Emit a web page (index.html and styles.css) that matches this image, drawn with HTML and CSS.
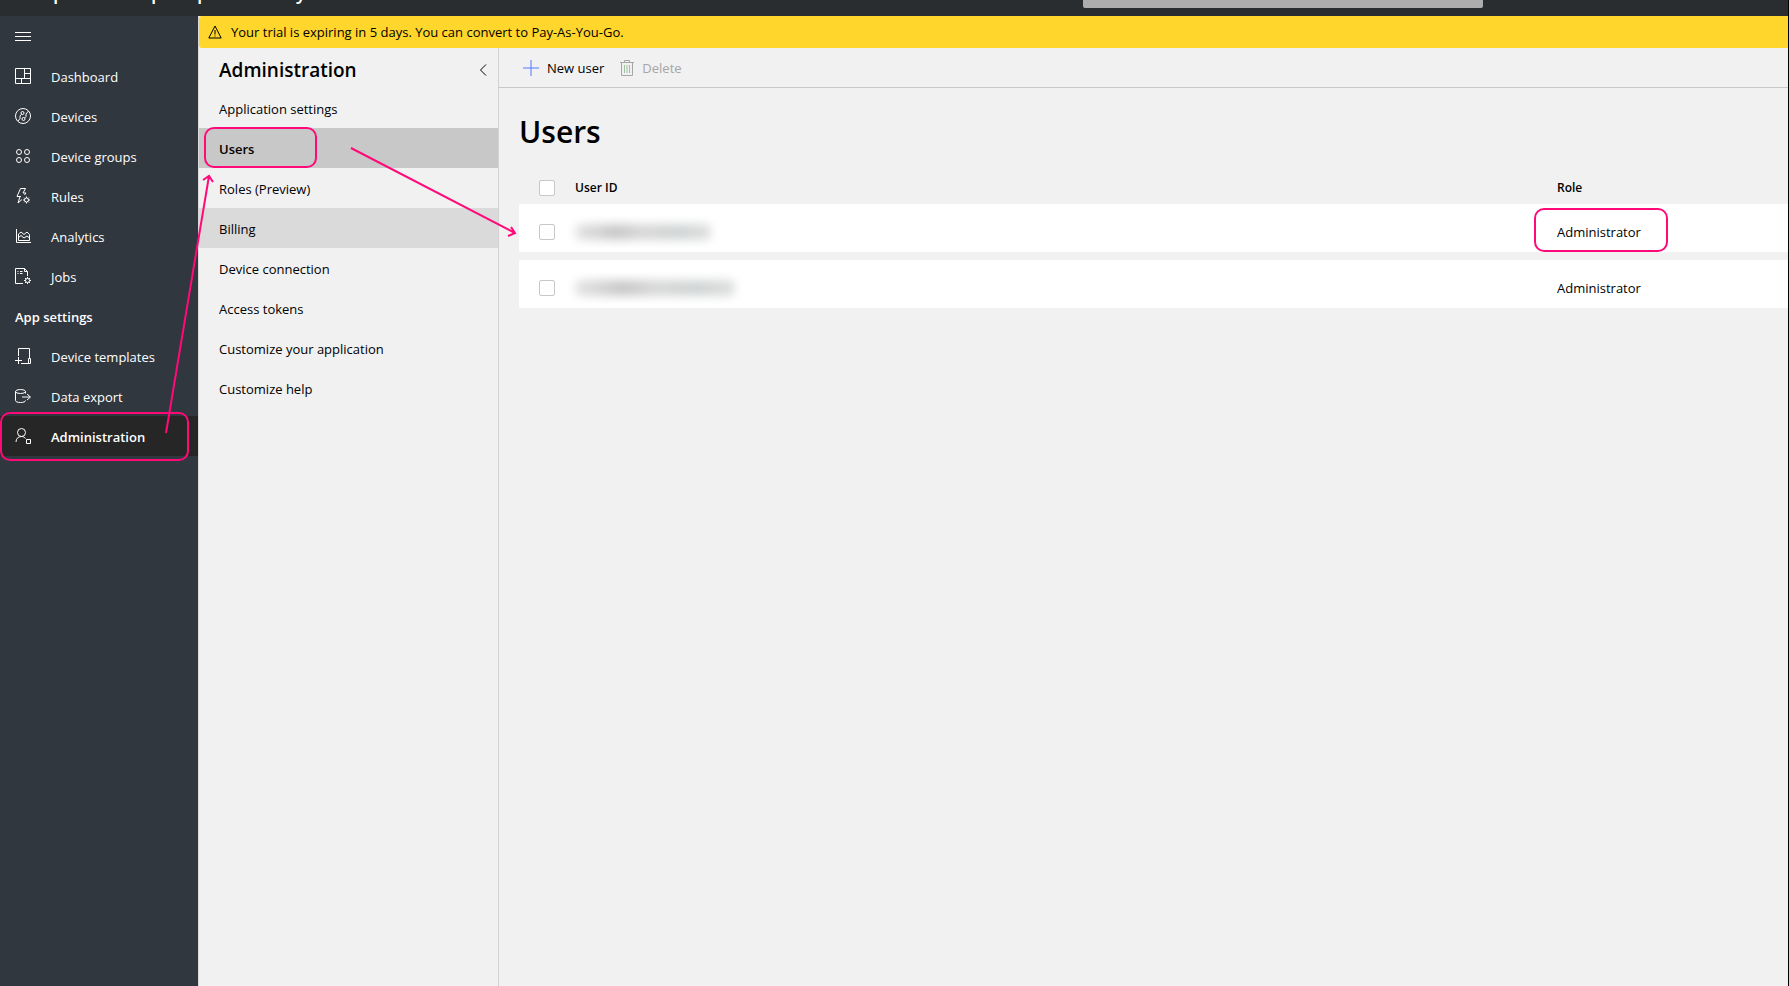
FILE: index.html
```html
<!DOCTYPE html>
<html lang="en">
<head>
<meta charset="utf-8">
<title>Administration - Users</title>
<link rel="stylesheet" href="styles.css">
</head>
<body>
<div class="app">
  <header class="topbar">
    <div class="app-title"><span>p</span><span>p</span><span>p</span><span>y</span></div>
    <input class="search" type="text" aria-label="Search">
  </header>
  <div class="body">
    <nav class="sidebar" aria-label="Main">
      <button class="nav-item menu" aria-label="Menu"><svg class="icon" viewBox="0 0 16 16"><path d="M0 4.500h16M0 8.500h16M0 12.500h16"/></svg></button>
      <a class="nav-item" href="#"><svg class="icon" viewBox="0 0 16 16"><path d="M.5.5h15v15H.5zM.5 10.500h15M9.500.5v10M9.500 5.500h6M6.500 10.500v5"/></svg>Dashboard</a>
      <a class="nav-item" href="#"><svg class="icon" viewBox="0 0 16 16"><circle cx="8" cy="8" r="7.500"/><circle cx="7.500" cy="5" r="1.500"/><circle cx="8.500" cy="11" r="1.500"/><path d="M6.500 6.200 5 8v2.500L3 13M9.500 10l1.500-1.500V6l2.500-3"/></svg>Devices</a>
      <a class="nav-item" href="#"><svg class="icon" viewBox="0 0 16 16"><circle cx="4" cy="4" r="2.500"/><circle cx="12" cy="4" r="2.500"/><circle cx="4" cy="12" r="2.500"/><circle cx="12" cy="12" r="2.500"/></svg>Device groups</a>
      <a class="nav-item" href="#"><svg class="icon" viewBox="0 0 16 16"><path d="M6 8.500H2L5.500.5h5L8 5h3L9.500 7M5 8.500 3 15l4-3.500"/><circle cx="11.500" cy="12" r="2"/><path d="M11.500 8.500V10M11.500 14v1.500M8 12h1.500M13.500 12H15M9.200 9.700l1 1M12.900 13.400l1 1M9.200 14.300l1-1M12.900 10.600l1-1"/></svg>Rules</a>
      <a class="nav-item" href="#"><svg class="icon" viewBox="0 0 16 16"><path d="M1.500 1v13.500H16M3.500 12.500V6L6 4l3 2.500L12 4l2.500 2.500v6zM3.500 9.500 6 7.500 9 10l3-2 2.500 2"/></svg>Analytics</a>
      <a class="nav-item" href="#"><svg class="icon" viewBox="0 0 16 16"><path d="M8 15.500H.5V.5h9l3 3V8M9.500.5v3h3M2.500 3.500h1M5 3.500h2.500M2.500 5.500h1M5 5.500h2.500"/><circle cx="12.500" cy="12.500" r="2"/><path d="M12.500 9v1.500M12.500 14.500V16M9 12.500h1.500M14.500 12.500H16M10 10l1 1M14 14l1 1M10 15l1-1M14 11l1-1"/></svg>Jobs</a>
      <h2 class="nav-heading">App settings</h2>
      <a class="nav-item" href="#"><svg class="icon" viewBox="0 0 16 16"><path d="M3.500 8V.5h11v10M6 15.500h8.500M0 12.500h7M3.500 9v7"/><path d="M13.500 10.500h2v5h-2z"/></svg>Device templates</a>
      <a class="nav-item" href="#"><svg class="icon" viewBox="0 0 16 16"><ellipse cx="5.500" cy="3.500" rx="5" ry="2"/><path d="M.5 3.500v9c0 1.300 2.200 2 5 2s5-.7 5-2M10.500 3.500v2M7 9h8M12 6l3.500 3-3.500 3"/></svg>Data export</a>
      <a class="nav-item current" href="#" aria-current="page"><svg class="icon" viewBox="0 0 16 16"><circle cx="6.500" cy="4.500" r="4"/><path d="M1 14c0-3.500 2.300-5.500 5.500-5.500 1.800 0 3.200.8 4 2M11.500 11.500h4v4h-4z"/></svg>Administration</a>
    </nav>
    <div class="workspace">
      <div class="notice" role="status"><svg class="notice-icon" viewBox="0 0 14 14"><path d="M7 1 .8 13h12.400zM7 5v4.500M7 10.500v1"/></svg>Your trial is expiring in 5 days. You can convert to Pay-As-You-Go.</div>
      <div class="columns">
        <nav class="subnav" aria-label="Administration">
          <div class="subnav-head">
            <h2 class="subnav-title">Administration</h2>
            <button class="collapse" aria-label="Collapse"><svg viewBox="0 0 8 12"><path d="M7 .5 1.500 6 7 11.500"/></svg></button>
          </div>
          <a class="subnav-item" href="#">Application settings</a>
          <a class="subnav-item selected" href="#" aria-current="page">Users</a>
          <a class="subnav-item" href="#">Roles (Preview)</a>
          <a class="subnav-item hovered" href="#">Billing</a>
          <a class="subnav-item" href="#">Device connection</a>
          <a class="subnav-item" href="#">Access tokens</a>
          <a class="subnav-item" href="#">Customize your application</a>
          <a class="subnav-item" href="#">Customize help</a>
        </nav>
        <main class="content">
          <div class="toolbar">
            <button class="command"><svg class="plus" viewBox="0 0 16 16"><path d="M8 0v16M0 8h16"/></svg>New user</button>
            <button class="command" disabled><svg class="trash" viewBox="0 0 14 16"><path d="M0 2.500h14M4.500 2V.5h5V2M1.500 3v12.500h11V3"/><path class="slats" d="M4.500 5v8M7 5v8M9.500 5v8"/></svg>Delete</button>
          </div>
          <h1 class="page-title">Users</h1>
          <table class="users">
            <thead>
              <tr><th class="check"><input type="checkbox" aria-label="Select all"></th><th>User ID</th><th class="role">Role</th></tr>
            </thead>
            <tbody>
              <tr><td class="check"><input type="checkbox" aria-label="Select first user"></td><td><span class="redacted"></span></td><td class="role">Administrator</td></tr>
              <tr><td class="check"><input type="checkbox" aria-label="Select second user"></td><td><span class="redacted wide"></span></td><td class="role">Administrator</td></tr>
            </tbody>
          </table>
        </main>
      </div>
    </div>
  </div>
  <svg class="annotations" aria-hidden="true">
    <rect x="1" y="413" width="187" height="47" rx="9"/>
    <rect x="205" y="128" width="111" height="39" rx="9"/>
    <rect x="1535" y="209" width="132" height="42" rx="9"/>
    <path d="M166 433 209 176M203 180l6-4 4 6"/>
    <path d="m351 148 164 85M511 227l4 6-7 3"/>
  </svg>
</div>
</body>
</html>
```
FILE: styles.css
```css
* { box-sizing: border-box; }
body {
  margin: 0;
  font: 13px/20px "Open Sans", "Noto Sans", sans-serif;
  color: #000;
  background: #f1f1f1;
}
button { border: 0; padding: 0; background: none; font: inherit; color: inherit; }
a { color: inherit; text-decoration: none; }
h1, h2 { margin: 0; }
svg { flex: none; fill: none; stroke: currentColor; }

.app {
  position: relative;
  display: flex;
  flex-direction: column;
  min-height: 100vh;
  border-right: 1px solid #000;
}
.topbar {
  position: relative;
  display: flex;
  align-items: flex-end;
  height: 16px;
  padding-left: 53px;
  background: #292d30;
  color: #fff;
  overflow: hidden;
}
.app-title { display: grid; grid-template-columns: 98px 46px 99px 20px; padding-bottom: 14px; font-size: 19px; font-weight: 600; }
.search {
  position: absolute;
  left: calc(61% - 8px);
  bottom: 8px;
  width: 400px;
  height: 32px;
  border: 0;
  border-radius: 2px;
  background: #adadad;
}
.body { display: flex; flex: 1; }
.sidebar {
  width: 198px;
  flex: none;
  background: #31373f;
  color: #fff;
}
.nav-item {
  display: flex;
  align-items: center;
  gap: 20px;
  width: 100%;
  height: 40px;
  padding: 2px 15px 0;
}
.icon { width: 16px; height: 16px; margin-top: -2px; }
.nav-heading { padding: 11px 15px 9px; font-size: 13px; line-height: 20px; font-weight: 600; }
.current { background: #262626; font-weight: 600; }

.workspace { display: flex; flex: 1; flex-direction: column; min-width: 0; border-left: 1px solid #dadada; }
.notice {
  display: flex;
  align-items: center;
  gap: 9px;
  height: 32px;
  padding-left: 9px;
  border-radius: 3px 0 0 3px;
  background: #ffd62b;
}
.notice-icon { width: 14px; height: 14px; }
.columns { display: flex; flex: 1; }
.subnav { width: 300px; flex: none; border-right: 1px solid #d2d2d2; }
.subnav-head { display: flex; align-items: center; justify-content: space-between; height: 40px; padding: 4px 11px 0 20px; }
.subnav-title { font-size: 19px; line-height: 28px; font-weight: 600; }
.collapse { width: 8px; height: 16px; }
.collapse svg { display: block; width: 8px; height: 12px; }
.subnav-item { display: block; height: 40px; padding: 11px 20px 9px; }
.selected { background: #c8c8c8; font-weight: 600; }
.hovered { background: #dadada; }

.content { flex: 1; min-width: 0; }
.toolbar { display: flex; align-items: center; gap: 16px; height: 40px; padding-left: 24px; border-bottom: 1px solid #c8c8c8; }
.command { display: flex; align-items: center; gap: 8px; }
.command:disabled { color: #a6a6a6; }
.plus { width: 16px; height: 16px; stroke: #4f7bff; }
.trash { width: 14px; height: 16px; }
.slats { stroke: #a0c0a0; }
.page-title { padding: 22px 20px 14px; font-size: 30px; line-height: 44px; font-weight: 600; }
.users { width: calc(100% - 20px); margin-left: 20px; border-collapse: separate; border-spacing: 0 8px; table-layout: fixed; }
.users th { height: 20px; padding: 4px 0 0; text-align: left; font-size: 12px; font-weight: 600; line-height: 16px; }
.users td { height: 48px; padding: 8px 0 0; background: #fff; }
.users .check { width: 56px; padding-left: 20px; }
.users .role { width: 231px; }
.users input {
  display: block;
  appearance: none;
  width: 16px;
  height: 16px;
  margin: 0;
  border: 1px solid #c8c8c8;
  border-radius: 2px;
  background: #fff;
}
.redacted {
  display: block;
  width: 136px;
  height: 16px;
  border-radius: 6px;
  background: linear-gradient(90deg, #e4e4e4, #c8c8c8 30%, #d8d8d8 50%, #d0d4d4 75%, #dedede);
  filter: blur(5px);
}
.wide { width: 160px; }
.annotations {
  position: absolute;
  inset: 0;
  width: 100%;
  height: 100%;
  pointer-events: none;
  stroke: #ff0a78;
  stroke-width: 2;
}
```
